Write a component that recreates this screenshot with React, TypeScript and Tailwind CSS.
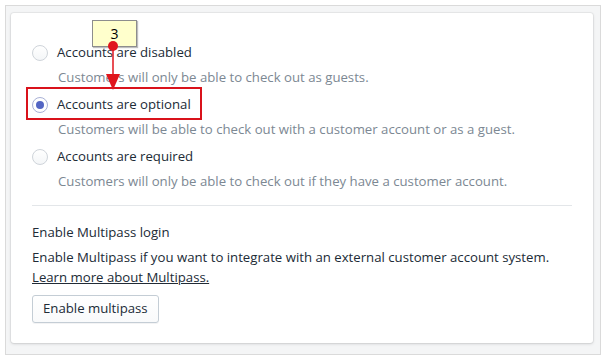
import React from 'react';

type Option = { id: string; label: string; help: string };

const options: Option[] = [
  { id: 'disabled', label: 'Accounts are disabled', help: 'Customers will only be able to check out as guests.' },
  { id: 'optional', label: 'Accounts are optional', help: 'Customers will be able to check out with a customer account or as a guest.' },
  { id: 'required', label: 'Accounts are required', help: 'Customers will only be able to check out if they have a customer account.' },
];

function Radio({ checked }: { checked: boolean }) {
  return (
    <span
      className={
        checked
          ? 'flex h-4 w-4 items-center justify-center rounded-full border border-[#a9b1d6] bg-white'
          : 'flex h-4 w-4 items-center justify-center rounded-full border border-[#cfd4da] bg-gradient-to-b from-white to-[#f4f6f8]'
      }
    >
      {checked && <span className="h-2 w-2 rounded-full bg-[#5466c4]" />}
    </span>
  );
}

export default function App() {
  const selected = 'optional';

  return (
    <div
      className="relative h-[360px] w-[614px] bg-white pl-[5px] pt-[5px]"
      style={{ fontFamily: '"Open Sans", "Liberation Sans", sans-serif' }}
    >
      <div className="h-[350px] w-[596px] border border-[#dadada] bg-[#f4f5f6] pb-[10px] pl-[5px] pr-[7px] pt-[7px]">
        <div className="h-[330px] rounded-[3px] bg-white px-[21px] pt-[30px] shadow-[0_0_0_1px_rgba(63,63,68,0.06),0_1px_3px_0_rgba(63,63,68,0.18)]">
          {options.map((o) => (
            <div key={o.id} className="mb-2">
              <div className="flex h-5 items-center gap-[9px] text-[13.2px] text-[#212b36]">
                <Radio checked={o.id === selected} />
                <span>{o.label}</span>
              </div>
              <p className="mt-1 h-5 pl-[26px] text-[13.2px] leading-5 text-[#7c8893]">{o.help}</p>
            </div>
          ))}

          <div className="mt-[14px] border-t border-[#e3e6e9]" />

          <p className="mt-[16px] h-5 text-[13.2px] leading-5 text-[#212b36]">Enable Multipass login</p>
          <p className="mt-[5px] text-[13.2px] leading-5 text-[#212b36]">
            Enable Multipass if you want to integrate with an external customer account system.
            <br />
            <a href="#" className="underline">Learn more about Multipass.</a>
          </p>
          <button
            type="button"
            className="mt-[8px] h-[28px] rounded-[3px] border border-[#c4cdd5] bg-gradient-to-b from-white to-[#f9fafb] px-[10px] text-[13.2px] text-[#212b36] shadow-[0_1px_0_rgba(22,29,37,0.05)]"
          >
            Enable multipass
          </button>
        </div>
      </div>

      {/* annotation overlay */}
      <div className="absolute left-[26px] top-[87px] h-[33px] w-[176px] border-2 border-[#d9121b]" />
      <div className="absolute left-[92px] top-[20px] flex h-[27px] w-[45px] items-center justify-center border border-[#8d8d8d] bg-[#ffffcc] text-[14px] text-black shadow-[1px_1px_1px_rgba(0,0,0,0.25)]">
        3
      </div>
      <svg className="absolute left-[100px] top-[38px]" width="26" height="56" viewBox="0 0 26 56">
        <line x1="13" y1="8" x2="13" y2="40" stroke="#e0151c" strokeWidth="1.5" />
        <circle cx="13" cy="8" r="5" fill="#e0151c" />
        <polygon points="6,36 20,36 13,52" fill="#e0151c" />
      </svg>
    </div>
  );
}
